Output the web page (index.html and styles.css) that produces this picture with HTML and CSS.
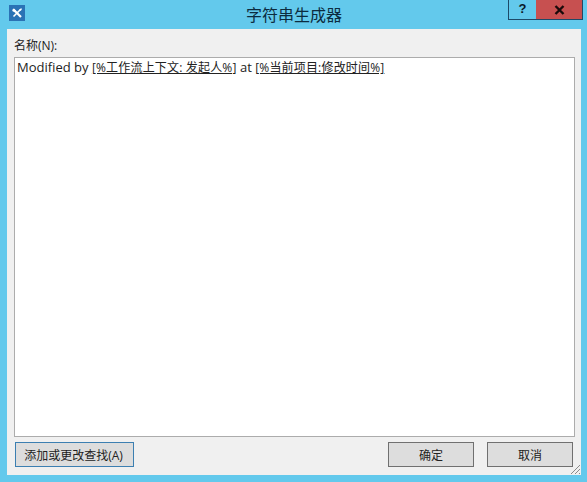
FILE: index.html
```html
<!DOCTYPE html>
<html lang="zh">
<head>
<meta charset="utf-8">
<title>字符串生成器</title>
<link rel="stylesheet" href="styles.css">
</head>
<body>
<div class="window">
  <header class="titlebar">
    <div class="app-icon">
      <svg viewBox="0 0 16 16" width="16" height="16"><rect width="16" height="16" fill="#2a72b5"/><path d="M5.5 5.5 L12 12" stroke="#fff" stroke-width="2.2"/><path d="M11.5 4.5 L4.5 11.5" stroke="#fff" stroke-width="1.6"/><path d="M3.2 5 L4.6 3.4 L5.8 4 L7 6 L5.6 7.2 L3.6 6.2 Z" fill="#fff"/><path d="M10.5 4.2 L12.2 3.2 L13 4 L11.9 5.7 L10.8 5.4 Z" fill="#fff"/></svg>
    </div>
    <h1 class="title">字符串生成器</h1>
    <div class="caption-buttons">
      <div class="btn-help">?</div>
      <div class="btn-close">
        <svg viewBox="0 0 11 10" width="11" height="10"><path d="M1.5 1 L9.5 9 M9.5 1 L1.5 9" stroke="#1a0a0a" stroke-width="2.4"/></svg>
      </div>
    </div>
  </header>
  <main class="client">
    <label class="field-label">名称(N):</label>
    <div class="editor"><p class="editor-line">Modified by <span class="token">[%工作流上下文: 发起人%]</span> at <span class="token">[%当前项目:修改时间%]</span></p></div>
    <footer class="actions">
      <button class="btn btn-default">添加或更改查找(A)</button>
      <div class="actions-right">
        <button class="btn btn-dialog">确定</button>
        <button class="btn btn-dialog">取消</button>
      </div>
    </footer>
    <svg class="grip" viewBox="0 0 12 12" width="12" height="12"><path d="M11 2 L2 11 M11 6 L6 11 M11 10 L10 11" stroke="#8a8a8a" stroke-width="1"/></svg>
  </main>
</div>
</body>
</html>
```
FILE: styles.css
```css
* { box-sizing: border-box; }
html, body { margin: 0; padding: 0; }
body {
  width: 587px;
  height: 482px;
  overflow: hidden;
  background: #63c9ec;
  font-family: "Open Sans", "Noto Sans CJK SC", sans-serif;
  font-size: 12px;
  color: #1a1a1a;
}
.window { display: flex; flex-direction: column; height: 482px; padding: 0 6px 7px 7px; }
.titlebar { position: relative; height: 29px; flex: none; display: flex; align-items: flex-start; justify-content: center; }
.app-icon { position: absolute; left: 2px; top: 5px; width: 16px; height: 16px; }
.title { margin: 0; padding-top: 5px; font-size: 16px; font-weight: 400; line-height: 20px; color: #0c2c40; }
.caption-buttons { position: absolute; right: -2px; top: 0; display: flex; height: 20px; }
.btn-help {
  width: 28px; height: 20px;
  border: 1px solid #1d4a68; border-top: 0; border-right: 0;
  text-align: center; font: 700 13px/17px "Liberation Sans", sans-serif; color: #0a1a2a;
}
.btn-close {
  width: 47px; height: 20px; background: #c75050;
  border: 1px solid #1d4a68; border-top: 0; border-left: 0;
  display: flex; align-items: center; justify-content: center;
}
.client { position: relative; flex: 1; background: #f0f0f0; display: flex; flex-direction: column; padding: 9px 6px 8px 7px; }
.field-label { height: 19px; line-height: 15px; font-size: 12px; color: #222; }
.editor { flex: 1; background: #fff; border: 1px solid #acacac; padding: 1px 2px; }
.editor-line { margin: 0; font-size: 13px; line-height: 17px; color: #222; }
.token { text-decoration: underline; font-size: 12px; letter-spacing: 0.18px; }
.actions { display: flex; justify-content: space-between; padding: 5px 2px 0 1px; }
.actions-right { display: flex; gap: 13px; }
.btn {
  height: 25px; padding: 0; background: #dddddd; border: 1px solid #707070;
  font-family: "Open Sans", "Noto Sans CJK SC", sans-serif; font-size: 12px; color: #222;
}
.btn-default { width: 119px; border-color: #3c7fb1; padding-right: 2px; }
.btn-dialog { width: 86px; }
.grip { position: absolute; right: 0; bottom: 0; }
```
